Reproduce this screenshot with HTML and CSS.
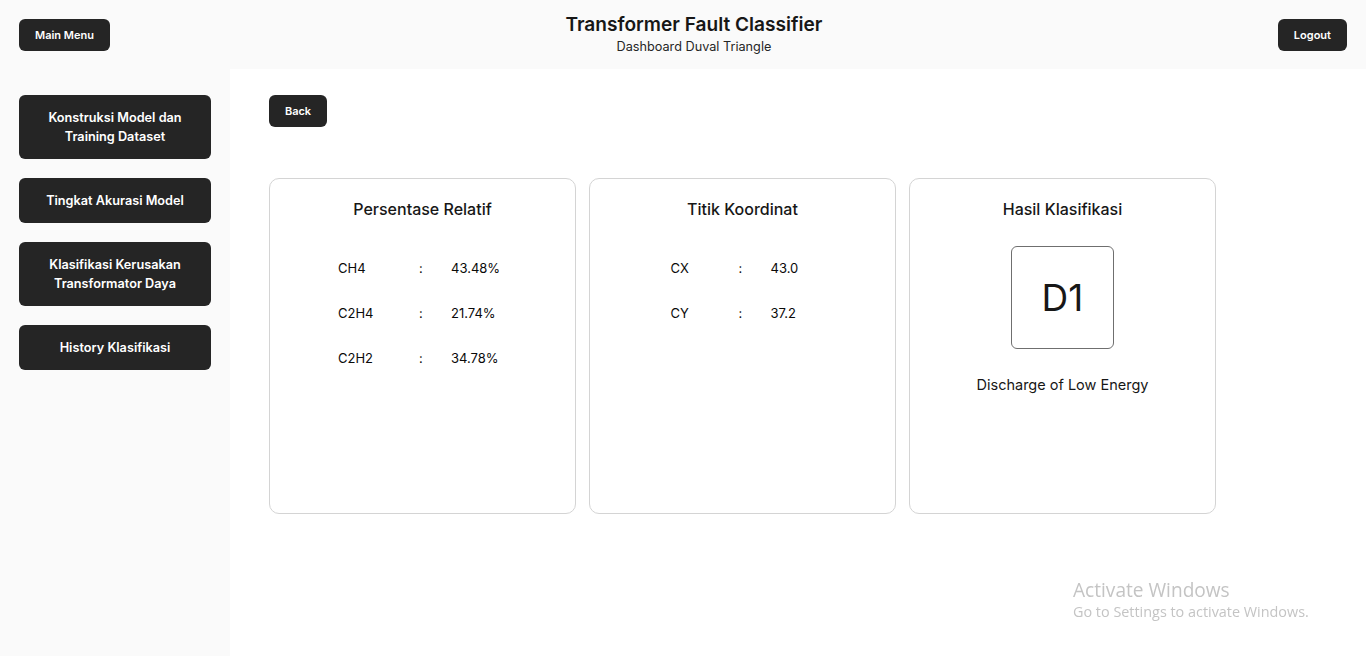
FILE: index.html
```html
<!DOCTYPE html>
<html lang="id">
<head>
<meta charset="utf-8">
<title>Transformer Fault Classifier</title>
<link rel="stylesheet" href="styles.css">
</head>
<body>
<header class="topbar">
  <button class="btn btn-sm">Main Menu</button>
  <div class="brand">
    <h1 class="brand-title">Transformer Fault Classifier</h1>
    <p class="brand-sub">Dashboard Duval Triangle</p>
  </div>
  <button class="btn btn-sm">Logout</button>
</header>
<div class="layout">
  <aside class="sidebar">
    <button class="btn nav-btn tall">Konstruksi Model dan<br>Training Dataset</button>
    <button class="btn nav-btn">Tingkat Akurasi Model</button>
    <button class="btn nav-btn tall">Klasifikasi Kerusakan<br>Transformator Daya</button>
    <button class="btn nav-btn">History Klasifikasi</button>
  </aside>
  <main class="content">
    <button class="btn btn-sm back">Back</button>
    <section class="cards">
      <div class="card">
        <h2 class="card-title">Persentase Relatif</h2>
        <div class="rows rows-gas">
          <span class="lbl">CH4</span><span class="colon">:</span><span class="val">43.48%</span>
          <span class="lbl">C2H4</span><span class="colon">:</span><span class="val">21.74%</span>
          <span class="lbl">C2H2</span><span class="colon">:</span><span class="val">34.78%</span>
        </div>
      </div>
      <div class="card">
        <h2 class="card-title">Titik Koordinat</h2>
        <div class="rows rows-coord">
          <span class="lbl">CX</span><span class="colon">:</span><span class="val">43.0</span>
          <span class="lbl">CY</span><span class="colon">:</span><span class="val">37.2</span>
        </div>
      </div>
      <div class="card">
        <h2 class="card-title">Hasil Klasifikasi</h2>
        <div class="result-box">D1</div>
        <p class="result-desc">Discharge of Low Energy</p>
      </div>
    </section>
  </main>
</div>
<div class="watermark">
  <div class="wm-title">Activate Windows</div>
  <div class="wm-sub">Go to Settings to activate Windows.</div>
</div>
</body>
</html>
```
FILE: styles.css
```css
* { box-sizing: border-box; }
html, body { margin: 0; padding: 0; height: 100%; }
body {
  font-family: Inter, "Noto Sans", sans-serif;
  color: #171717;
  background: #ffffff;
  overflow: hidden;
}
.btn {
  font-family: Inter, "Noto Sans", sans-serif;
  background: #252525;
  color: #ffffff;
  border: none;
  border-radius: 6px;
  font-weight: 600;
  cursor: pointer;
}
.btn-sm {
  height: 32px;
  padding: 0 16px;
  font-size: 11px;
}
.topbar {
  height: 69px;
  background: #fafafa;
  display: flex;
  align-items: center;
  justify-content: space-between;
  padding: 0 19px;
}
.brand {
  text-align: center;
  padding-bottom: 3px;
}
.brand-title {
  margin: 0;
  font-size: 19.1px;
  line-height: 24px;
  font-weight: 600;
  color: #171717;
}
.brand-sub {
  margin: 3px 0 0;
  font-size: 12.7px;
  line-height: 16px;
  color: #262626;
}
.layout {
  display: flex;
  height: calc(100% - 69px);
}
.sidebar {
  width: 230px;
  background: #fafafa;
  padding: 26px 19px;
  display: flex;
  flex-direction: column;
  gap: 19px;
}
.nav-btn {
  width: 192px;
  height: 45px;
  font-size: 12.7px;
  line-height: 19px;
  border-radius: 6px;
}
.nav-btn.tall { height: 64px; }
.content {
  flex: 1;
  padding: 26px 39px;
}
.back { padding: 0; width: 58px; }
.cards {
  margin-top: 51px;
  display: flex;
  gap: 13px;
}
.card {
  width: 307px;
  height: 336px;
  border: 1px solid #d4d4d4;
  border-radius: 10px;
  padding-top: 20px;
  display: flex;
  flex-direction: column;
  align-items: center;
}
.card-title {
  margin: 0;
  font-size: 16px;
  line-height: 20px;
  font-weight: 500;
  color: #171717;
}
.rows {
  margin-top: 41px;
  display: grid;
  row-gap: 29px;
  font-size: 13px;
  line-height: 16px;
  color: #0a0a0a;
}
.rows-gas { grid-template-columns: 81px 32px 56px; }
.rows-coord { grid-template-columns: 68px 32px 44px; }
.result-box {
  margin-top: 27px;
  width: 103px;
  height: 103px;
  border: 1px solid #6f6f6f;
  border-radius: 6px;
  display: flex;
  align-items: center;
  justify-content: center;
  font-size: 37px;
  font-weight: 400;
  color: #171717;
}
.result-desc {
  margin: 27px 0 0;
  font-size: 14.5px;
  line-height: 18px;
  color: #171717;
}
.watermark {
  position: fixed;
  left: 1073px;
  top: 579px;
  font-family: "Open Sans", "Noto Sans", sans-serif;
  color: #c4c4c4;
}
.wm-title { font-size: 19.1px; line-height: 22px; }
.wm-sub { font-size: 14.4px; line-height: 22px; }
```
